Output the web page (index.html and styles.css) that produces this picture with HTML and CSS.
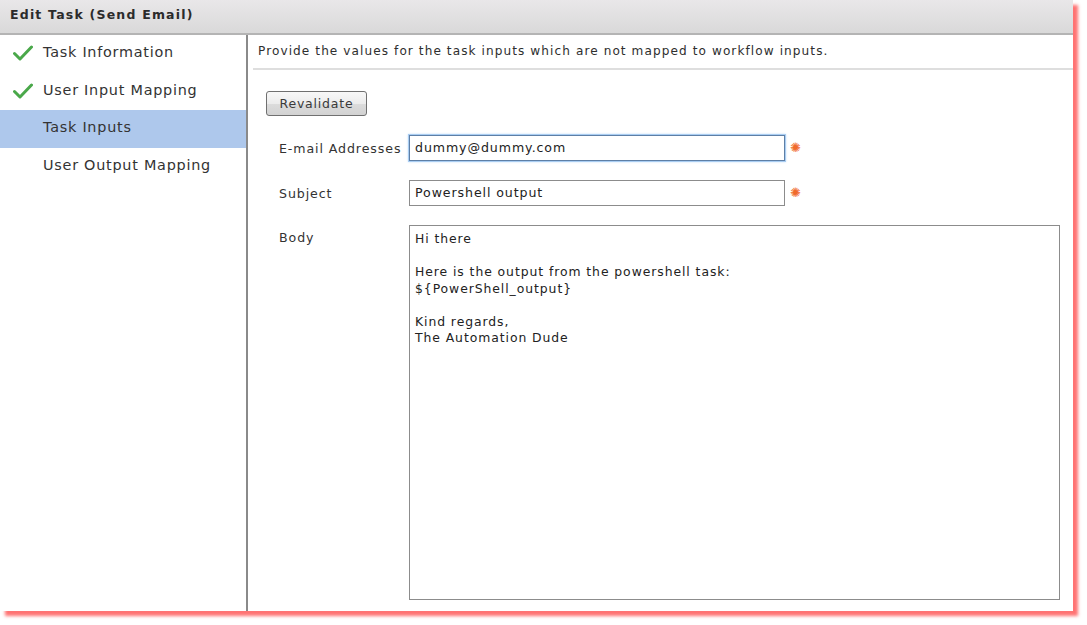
FILE: index.html
```html
<!DOCTYPE html>
<html>
<head>
<meta charset="utf-8">
<link rel="stylesheet" href="styles.css">
</head>
<body>
<div class="window">
  <div class="titlebar">Edit Task (Send Email)</div>
  <div class="main">
    <ul class="steps">
      <li class="step done"><svg class="check" viewBox="0 0 20 16" width="20" height="16"><path d="M1.5 8.5 L7 14 L18.5 2" fill="none" stroke="#4aa84a" stroke-width="3" stroke-linecap="round" stroke-linejoin="round"/></svg><span>Task Information</span></li>
      <li class="step done"><svg class="check" viewBox="0 0 20 16" width="20" height="16"><path d="M1.5 8.5 L7 14 L18.5 2" fill="none" stroke="#4aa84a" stroke-width="3" stroke-linecap="round" stroke-linejoin="round"/></svg><span>User Input Mapping</span></li>
      <li class="step active"><span>Task Inputs</span></li>
      <li class="step"><span>User Output Mapping</span></li>
    </ul>
    <div class="content">
      <div class="desc">Provide the values for the task inputs which are not mapped to workflow inputs.</div>
      <div class="form">
        <button class="btn">Revalidate</button>
        <div class="row">
          <label class="lbl">E-mail Addresses</label>
          <div class="field focused">dummy@dummy.com</div>
          <span class="req">&#x273A;</span>
        </div>
        <div class="row">
          <label class="lbl">Subject</label>
          <div class="field">Powershell output</div>
          <span class="req">&#x273A;</span>
        </div>
        <div class="row body-row">
          <label class="lbl">Body</label>
          <div class="area">Hi there

Here is the output from the powershell task:
${PowerShell_output}

Kind regards,
The Automation Dude</div>
        </div>
      </div>
    </div>
  </div>
</div>
</body>
</html>
```
FILE: styles.css
```css
html, body {
  margin: 0;
  padding: 0;
  background: #ffffff;
}
body {
  font-family: "DejaVu Sans", Verdana, sans-serif;
  font-size: 12px;
  color: #2a2a2a;
  height: 625px;
}
.window {
  width: 1073px;
  height: 611px;
  background: #fff;
  box-shadow: 5px 5px 3px rgba(255, 90, 90, 0.85);
  display: flex;
  flex-direction: column;
  overflow: hidden;
}
.titlebar {
  height: 35px;
  box-sizing: border-box;
  padding: 7px 0 0 10px;
  background: linear-gradient(#e9e7e9, #d9d9d9);
  border-bottom: 2px solid #b4b4b4;
  font-weight: bold;
  font-size: 12.5px;
  color: #2b2b2b;
  letter-spacing: 1.2px;
  flex: none;
}
.main {
  flex: 1;
  display: flex;
  min-height: 0;
}
.steps {
  list-style: none;
  margin: 0;
  padding: 0;
  width: 246px;
  flex: none;
  border-right: 2px solid #8a8a8a;
}
.step {
  height: 37.6px;
  box-sizing: border-box;
  padding-bottom: 3px;
  display: flex;
  align-items: center;
  padding-left: 43px;
  position: relative;
  font-size: 14.4px;
  letter-spacing: 0.75px;
  color: #333;
}
.step .check {
  position: absolute;
  left: 13px;
  top: 10px;
}
.step.active {
  background: #aec8ec;
}
.content {
  flex: 1;
  display: block;
  padding-left: 5px;
  min-width: 0;
}
.desc {
  height: 35px;
  box-sizing: border-box;
  padding: 9px 0 0 5px;
  border-bottom: 2px solid #dedede;
  color: #2e2e2e;
  font-size: 12.1px;
  letter-spacing: 1.08px;
}
.form {
  padding: 21px 0 0 13px;
  display: flex;
  flex-direction: column;
  align-items: flex-start;
}
.btn {
  font-family: "DejaVu Sans", Verdana, sans-serif;
  font-size: 12.5px;
  letter-spacing: 0.8px;
  color: #3a3a3a;
  width: 101px;
  height: 25px;
  border: 1px solid #707070;
  border-radius: 3px;
  background: linear-gradient(#f8f8f8 0%, #ececec 50%, #dcdcdc 51%, #d2d2d2 100%);
  padding: 0;
  margin-bottom: 19px;
  flex: none;
}
.row {
  display: flex;
  align-items: center;
  margin-bottom: 19px;
  flex: none;
}
.lbl {
  width: 143px;
  padding-left: 13px;
  box-sizing: border-box;
  font-size: 12.6px;
  letter-spacing: 0.9px;
  color: #333;
}
.field {
  width: 376px;
  height: 26px;
  box-sizing: border-box;
  border: 1px solid #8c8c8c;
  padding: 4px 0 0 5px;
  font-size: 12.6px;
  letter-spacing: 0.9px;
  color: #222;
}
.field.focused {
  border: 1px solid #5e7fa6;
  box-shadow: 0 0 0 1px #a9cdf2, 0 0 2px 1px #c7e0f8;
}
.req {
  color: #f06a2a;
  font-size: 13px;
  margin-left: 5px;
  margin-top: -1px;
}
.body-row {
  align-items: flex-start;
  margin-bottom: 0;
}
.body-row .lbl {
  padding-top: 5px;
}
.area {
  width: 651px;
  height: 375px;
  box-sizing: border-box;
  border: 1px solid #8c8c8c;
  padding: 5px 0 0 5px;
  white-space: pre;
  font-size: 12.4px;
  letter-spacing: 0.93px;
  line-height: 16.5px;
  color: #222;
}
```
